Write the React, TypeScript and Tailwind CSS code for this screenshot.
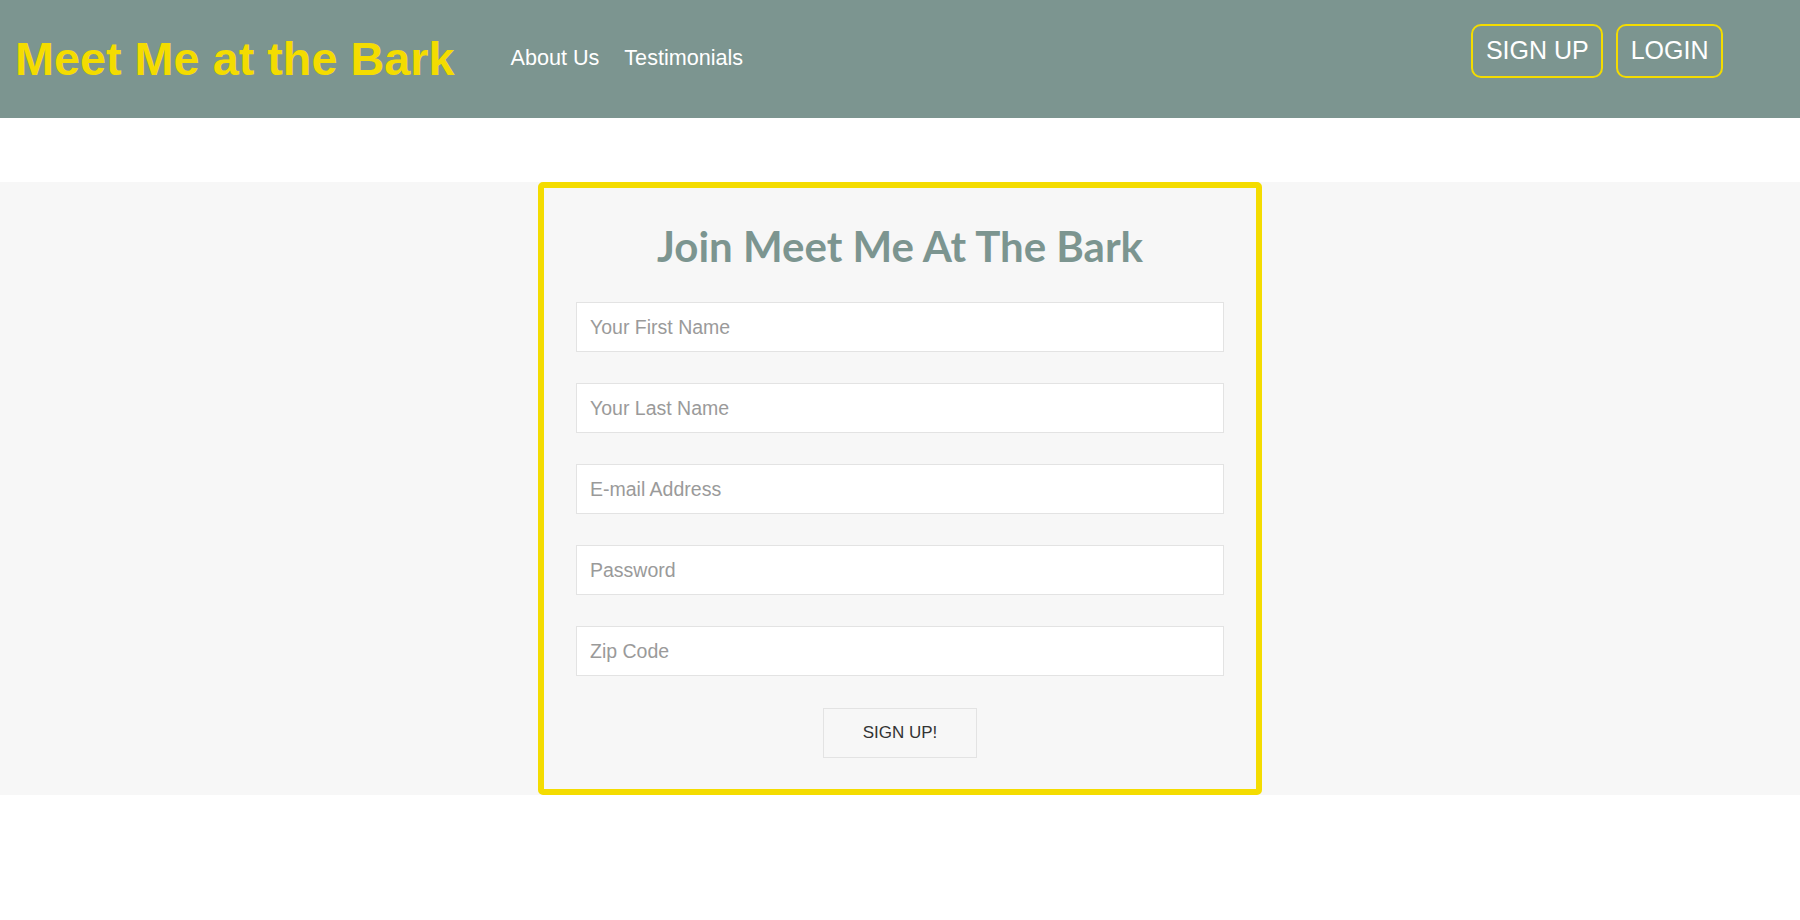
import { useState } from 'react';

const FIELDS = [
  { name: 'firstName', type: 'text', placeholder: 'Your First Name' },
  { name: 'lastName', type: 'text', placeholder: 'Your Last Name' },
  { name: 'email', type: 'email', placeholder: 'E-mail Address' },
  { name: 'password', type: 'password', placeholder: 'Password' },
  { name: 'zip', type: 'text', placeholder: 'Zip Code' },
];

const Header = () => {
  return (
    <header className="flex h-[118px] items-center bg-[#7c9590] pl-[15px] pr-[77px] font-['Liberation_Sans',Arial,sans-serif]">
      <a href="#" className="text-[46.8px] font-bold leading-none text-[#f4dc00]">
        Meet Me at the Bark
      </a>

      {/* NAV LINKS */}
      <nav className="ml-[56px] -mt-[1px] flex items-center gap-[25px] text-[21.6px] text-white">
        <a href="#about">About Us</a>
        <a href="#testimonials">Testimonials</a>
      </nav>

      {/* AUTH BUTTONS */}
      <div className="ml-auto -mt-[16px] flex items-center gap-[13px]">
        <button className="h-[54px] rounded-[10px] border-2 border-[#f4dc00] px-[12.5px] text-[25px] text-white">
          SIGN UP
        </button>
        <button className="h-[54px] rounded-[10px] border-2 border-[#f4dc00] px-[12.5px] text-[25px] text-white">
          LOGIN
        </button>
      </div>
    </header>
  );
};

const App = () => {
  const [form, setForm] = useState<Record<string, string>>({});

  return (
    <div className="min-h-screen bg-white">
      <Header />

      <section className="mt-[64px] flex justify-center bg-[#f7f7f7]">
        <form
          className="flex w-[724px] flex-col rounded-[5px] border-[6px] border-[#f4dc00] px-8 pt-[33px] pb-[31px]"
          onSubmit={(e) => e.preventDefault()}
        >
          <h1 className="mb-[31px] text-center font-['Lato','Open_Sans',sans-serif] text-[42px] font-bold leading-[50px] text-[#7c9590]">
            Join Meet Me At The Bark
          </h1>

          <div className="flex flex-col gap-[31px]">
            {FIELDS.map(({ name, type, placeholder }) => (
              <input
                key={name}
                type={type}
                name={name}
                placeholder={placeholder}
                value={form[name] ?? ''}
                onChange={(e) => setForm({ ...form, [name]: e.target.value })}
                className="h-[50px] w-full border border-[#e3e3e3] bg-white px-[13px] font-['Liberation_Sans',Arial,sans-serif] text-[19.5px] text-[#333] outline-none placeholder:text-[#9a9a9a]"
              />
            ))}
          </div>

          <button
            type="submit"
            className="mt-[32px] h-[50px] w-[154px] self-center border border-[#e3e3e3] bg-[#f7f7f7] font-['Liberation_Sans',Arial,sans-serif] text-[17px] text-[#333]"
          >
            SIGN UP!
          </button>
        </form>
      </section>
    </div>
  );
};

export default App;
